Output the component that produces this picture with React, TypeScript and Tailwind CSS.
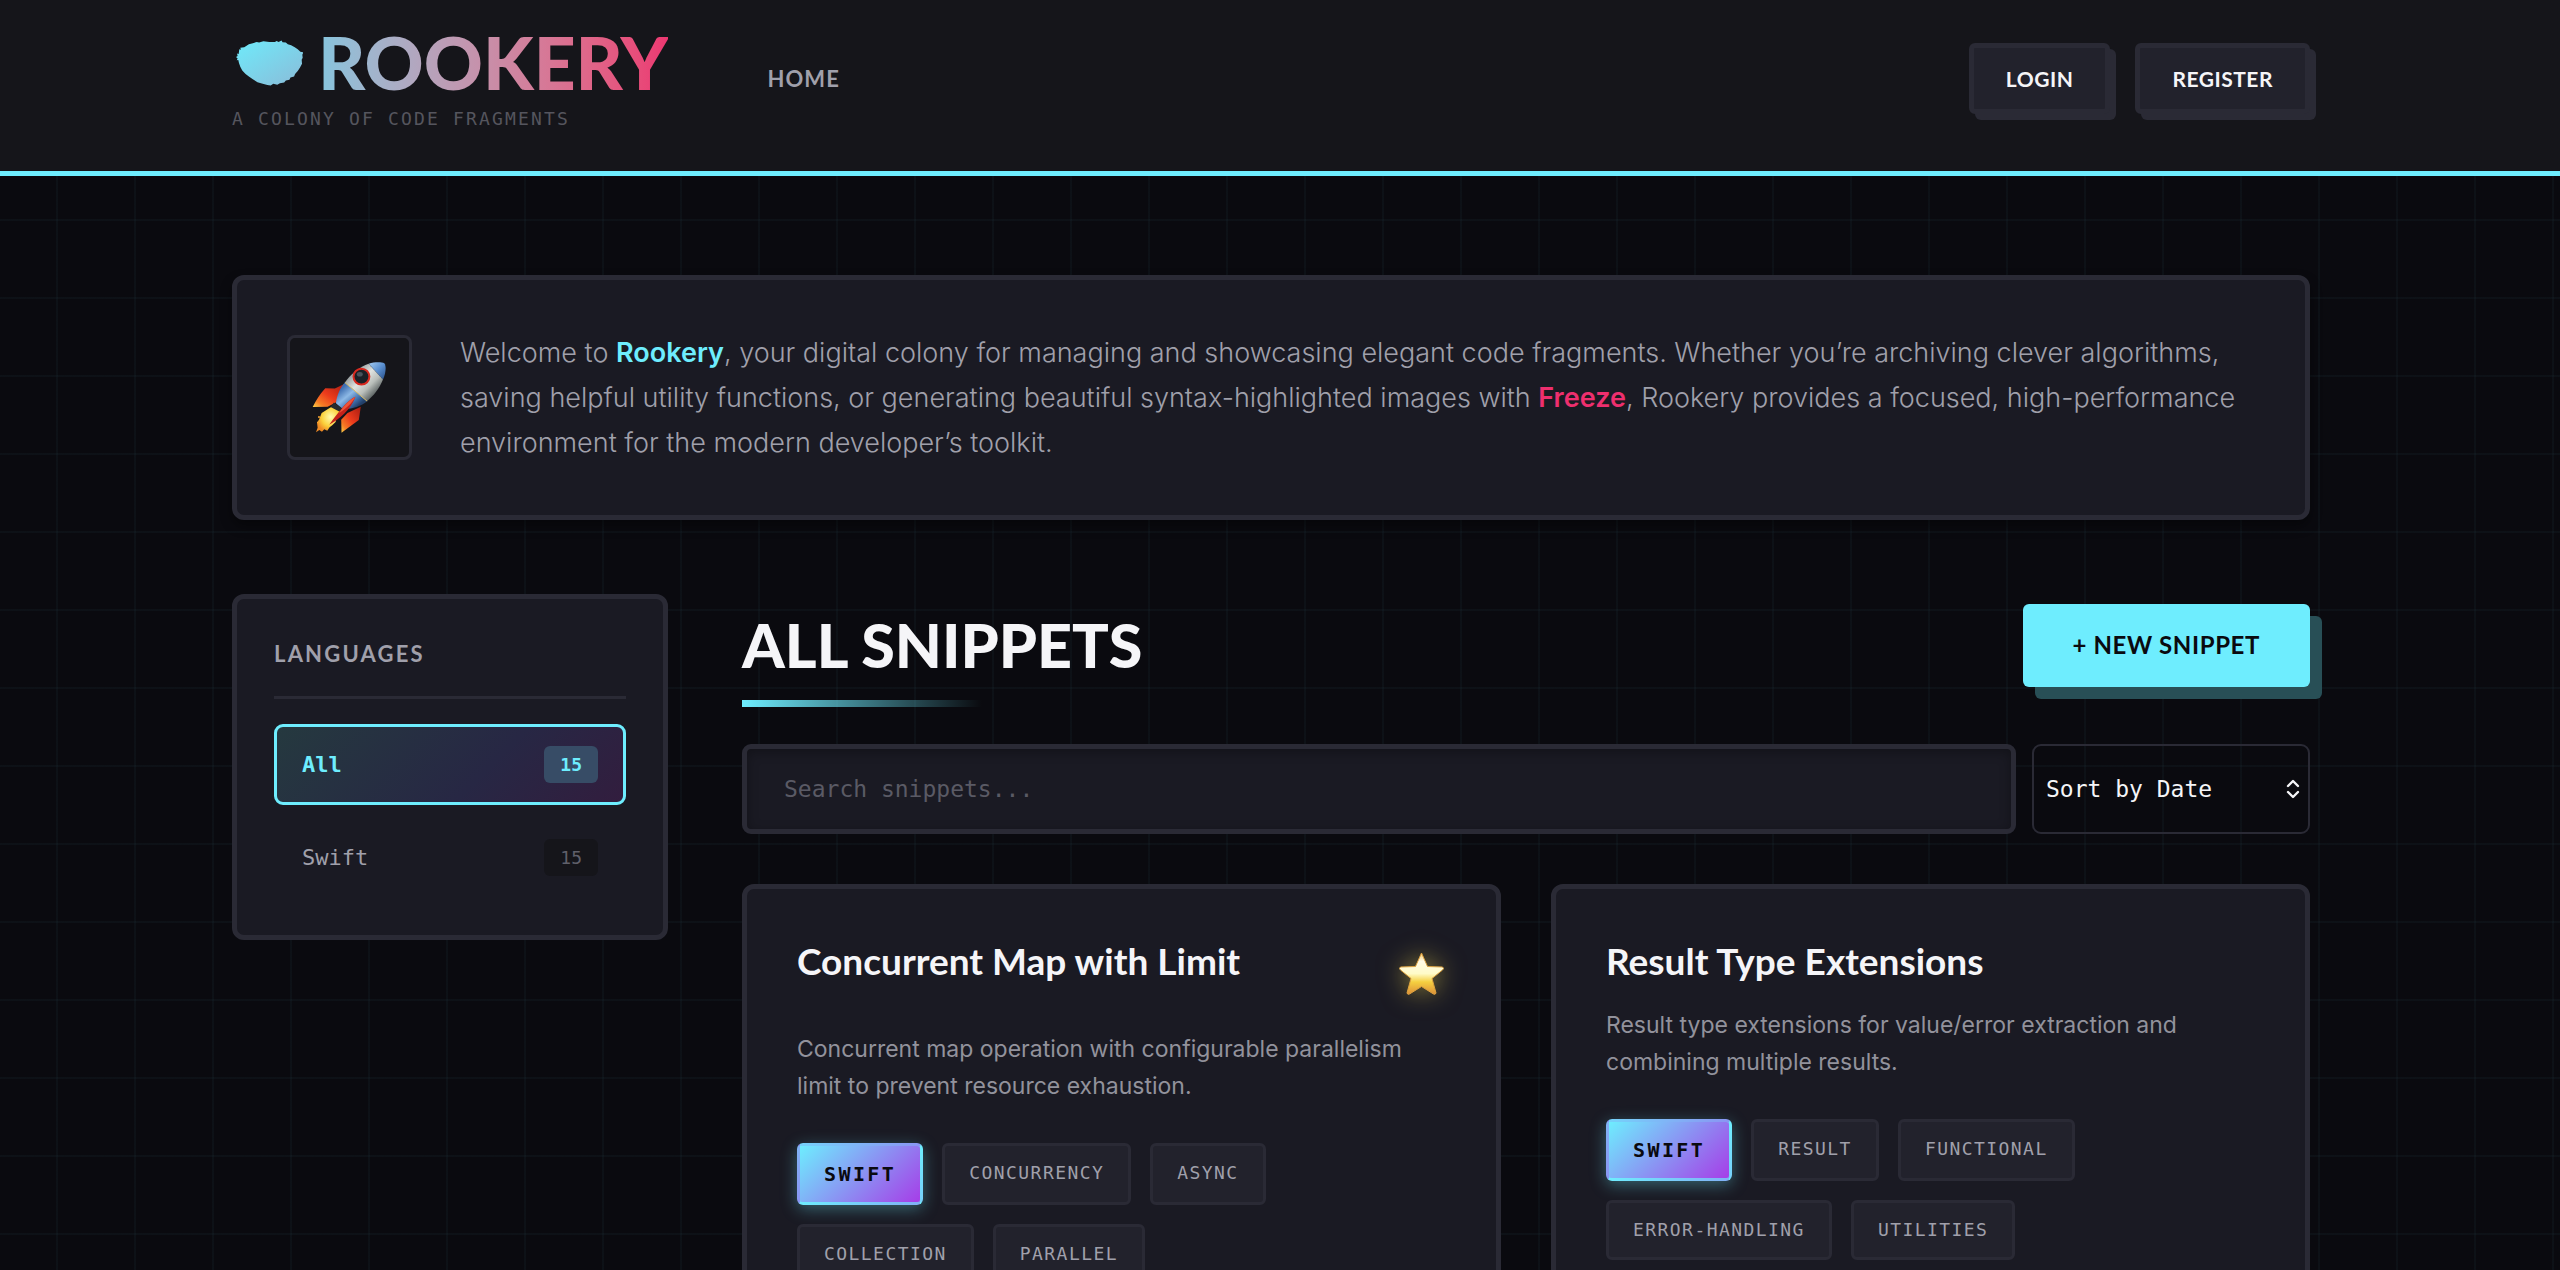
const languages = [
  { name: "All", count: 15, active: true },
  { name: "Swift", count: 15, active: false },
];

const snippets = [
  {
    title: "Concurrent Map with Limit",
    description:
      "Concurrent map operation with configurable parallelism limit to prevent resource exhaustion.",
    language: "Swift",
    tags: ["Concurrency", "Async", "Collection", "Parallel"],
    favorite: true,
  },
  {
    title: "Result Type Extensions",
    description:
      "Result type extensions for value/error extraction and combining multiple results.",
    language: "Swift",
    tags: ["Result", "Functional", "Error-Handling", "Utilities"],
    favorite: false,
  },
];

function LogoMark() {
  return (
    <svg width="67" height="46" viewBox="27 29 203 138" aria-hidden="true">
      <defs>
        <linearGradient id="mark" x1="0" y1="0" x2="1" y2="1">
          <stop offset="0" stopColor="#6eebfb" />
          <stop offset="1" stopColor="#8bbbd8" />
        </linearGradient>
      </defs>
      <path
        fill="url(#mark)"
        d="M27 80L32 77L30 69L35 71L37 56L42 58L40 52L52 50L66 41L78 38L90 34L97 36L110 32L128 34L145 34L150 31L156 34L165 30L168 35L178 36L184 41L194 44L205 50L214 56L222 64L231 66L228 73L229 82L226 88L227 100L221 112L214 122L206 131L203 139L192 142L189 149L178 151L173 157L160 159L152 164L140 161L132 166L122 165L108 161L92 156L78 147L66 139L56 131L46 121L40 109L36 98L34 89L29 90L32 84Z"
      />
    </svg>
  );
}

function Rocket() {
  return (
    <svg width="75" height="71" viewBox="92 105 224 214" role="img" aria-label="Rocket">
      <defs>
        <linearGradient id="hull" x1="0.2" y1="0.2" x2="0.8" y2="0.8">
          <stop offset="0" stopColor="#8d9496" />
          <stop offset="0.4" stopColor="#e0e3e0" />
          <stop offset="0.7" stopColor="#b9beba" />
          <stop offset="1" stopColor="#5d6464" />
        </linearGradient>
        <linearGradient id="belly" x1="0.2" y1="0.2" x2="0.8" y2="0.8">
          <stop offset="0" stopColor="#3d6db0" />
          <stop offset="0.4" stopColor="#8db9e6" />
          <stop offset="0.75" stopColor="#3f70ad" />
          <stop offset="1" stopColor="#223f68" />
        </linearGradient>
        <linearGradient id="nose" x1="0" y1="0" x2="1" y2="1">
          <stop offset="0" stopColor="#a6cdf2" />
          <stop offset="0.5" stopColor="#5a8fd0" />
          <stop offset="1" stopColor="#284f88" />
        </linearGradient>
        <linearGradient id="fin" x1="1" y1="0" x2="0" y2="1">
          <stop offset="0" stopColor="#a81c12" />
          <stop offset="0.5" stopColor="#ec3b1c" />
          <stop offset="0.8" stopColor="#f77c25" />
          <stop offset="1" stopColor="#fbd24a" />
        </linearGradient>
        <radialGradient id="flame" cx="0.6" cy="0.4" r="0.6">
          <stop offset="0" stopColor="#fffbb0" />
          <stop offset="0.6" stopColor="#fbd23c" />
          <stop offset="1" stopColor="#f08a24" />
        </radialGradient>
      </defs>
      <path fill="url(#flame)" d="M150 240l26 12-10 18-4 16-10 10-8 6-7 10-9-4-7 7-8-5-10 7 5-14-2-16 6-8 8-20z" />
      <circle cx="112" cy="271" r="3" fill="#f7a531" />
      <circle cx="108" cy="287" r="2" fill="#f7a531" />
      <path fill="url(#fin)" d="M188 171L160 185L131 184Q108 209 93 241L138 240L164 226Z" />
      <path fill="url(#fin)" d="M238 240L232 280L180 318L179 279L198 259Z" />
      <path fill="#262b2e" d="M157 227l24 18-8 9-26-13z" />
      <path fill="url(#belly)" d="M190 167C176 182 166 205 163 229L183 246C208 248 238 239 257 223Z" />
      <path fill="url(#hull)" d="M190 167C205 143 235 119 262 110L305 158C294 185 276 208 257 223Z" />
      <path fill="url(#nose)" d="M262 110C278 105 300 104 309 109C316 119 313 140 305 158Z" />
      <path fill="none" stroke="#d9bd6b" strokeWidth="3" d="M190 167L257 223" />
      <path fill="none" stroke="#7a8286" strokeWidth="2" strokeDasharray="3 4" d="M262 112L304 157" />
      <path fill="#c5221a" d="M222 210C198 220 172 255 143 294C172 278 208 250 222 210Z" />
      <path fill="#ee5337" d="M222 210C200 222 184 240 172 260C192 246 212 230 222 210Z" />
      <circle cx="240" cy="149" r="24" fill="#1b2026" stroke="#d8281e" strokeWidth="6" />
      <ellipse cx="235" cy="142" rx="9" ry="7" fill="#49525b" />
    </svg>
  );
}

function Star() {
  return (
    <svg
      width="45"
      height="43"
      viewBox="0 0 90 86"
      className="overflow-visible drop-shadow-[0_0_12px_rgba(255,230,80,0.5)]"
      aria-hidden="true"
    >
      <defs>
        <linearGradient id="star" x1="0" y1="0" x2="0" y2="1">
          <stop offset="0" stopColor="#f6c667" />
          <stop offset="0.2" stopColor="#fffbe6" />
          <stop offset="0.5" stopColor="#fffbc8" />
          <stop offset="0.7" stopColor="#f5d040" />
          <stop offset="1" stopColor="#dd8f38" />
        </linearGradient>
      </defs>
      <path
        fill="url(#star)"
        stroke="#dda240"
        strokeWidth="2"
        strokeLinejoin="round"
        d="M45 2L57 29L87 30Q91 33 87 36L66 53L74 82Q73 86 69 84L45 69L21 84Q17 86 16 82L24 53L3 36Q-1 33 3 30L33 29Z"
      />
    </svg>
  );
}

function Header() {
  return (
    <header className="bg-[#15151a] border-b-5 border-[#6eedfe] pr-[18px]">
      <div className="max-w-[2178px] mx-auto px-[50px] pt-[25px] pb-[39px] flex items-center">
        <div>
          <a href="#" className="flex items-center gap-[15px] pl-1 h-[75px]">
            <LogoMark />
            <span className="font-['Lato',sans-serif] font-black text-[73px] leading-[75px] bg-linear-to-r from-[#85c5de] to-[#ec3771] bg-clip-text text-transparent">
              ROOKERY
            </span>
          </a>
          <p className="mt-[5px] font-['DejaVu_Sans_Mono',monospace] text-[18px] leading-[27px] tracking-[0.12em] text-[#55555e] uppercase">
            A colony of code fragments
          </p>
        </div>
        <nav className="ml-[99px]">
          <a
            href="#"
            className="font-['Lato',sans-serif] font-bold text-[22px] tracking-wider text-[#a0a0ab]"
          >
            HOME
          </a>
        </nav>
        <div className="ml-auto flex gap-[25px]">
          {["LOGIN", "REGISTER"].map((label) => (
            <button
              key={label}
              className="h-[71px] px-8 rounded-md border-5 border-[#2a2a35] bg-[#22222c] shadow-[6px_6px_0_#2a2a35] font-['Lato',sans-serif] font-bold text-[21px] tracking-wide text-[#f5f5f8]"
            >
              {label}
            </button>
          ))}
        </div>
      </div>
    </header>
  );
}

export default function App() {
  return (
    <div className="min-h-screen bg-[#0a0a0f] bg-[linear-gradient(rgba(110,237,254,0.03)_2px,transparent_2px),linear-gradient(90deg,rgba(110,237,254,0.03)_2px,transparent_2px)] bg-[length:78px_78px] bg-[position:56px_63px] text-[#f5f5f8]">
      <Header />

      <div className="pr-[18px]">
        <main className="max-w-[2178px] mx-auto px-[50px] pt-[99px] pb-[100px]">
          {/* Intro */}
          <section className="flex items-center gap-12 p-[50px] rounded-xl border-5 border-[#2a2a35] bg-[#1a1a23] shadow-[0_6px_12px_rgba(0,0,0,0.4)]">
            <div className="w-[125px] h-[125px] shrink-0 flex items-center justify-center rounded-lg border-3 border-[#2a2a35] bg-[#15151a]">
              <Rocket />
            </div>
            <p className="font-['Inter',sans-serif] font-light text-[27px] leading-[45px] text-[#a0a0ab]">
              Welcome to{" "}
              <strong className="font-semibold text-[#6eedfe]">Rookery</strong>,
              your digital colony for managing and showcasing elegant code
              fragments. Whether you’re archiving clever algorithms, saving
              helpful utility functions, or generating beautiful
              syntax-highlighted images with{" "}
              <strong className="font-semibold text-[#ee2f6e]">Freeze</strong>,
              Rookery provides a focused, high-performance environment for the
              modern developer’s toolkit.
            </p>
          </section>

          <div className="mt-[74px] flex items-start gap-[74px]">
            {/* Sidebar */}
            <aside className="w-[436px] shrink-0 p-[37px] rounded-xl border-5 border-[#2a2a35] bg-[#1a1a23]">
              <h3 className="pb-6 mb-[25px] border-b-3 border-[#2a2a35] font-['Lato',sans-serif] font-bold text-[22px] leading-9 tracking-widest text-[#a0a0ab]">
                LANGUAGES
              </h3>
              <ul className="flex flex-col gap-3">
                {languages.map((lang) => (
                  <li key={lang.name}>
                    <a
                      href="#"
                      className={
                        lang.active
                          ? "flex items-center justify-between h-[81px] px-[25px] rounded-[9px] border-3 border-[#6eedfe] bg-linear-[135deg,#25393f,#272744_60%,#321d3e] text-[#6eedfe] font-bold"
                          : "flex items-center justify-between h-[81px] px-[25px] rounded-[9px] border-3 border-transparent text-[#a0a0ab]"
                      }
                    >
                      <span className="font-['DejaVu_Sans_Mono',monospace] text-[22px]">
                        {lang.name}
                      </span>
                      <span
                        className={
                          lang.active
                            ? "px-4 rounded-md bg-[#374c66] font-['DejaVu_Sans_Mono',monospace] text-[18px] leading-[37px]"
                            : "px-4 rounded-md bg-[#15151a] font-['DejaVu_Sans_Mono',monospace] text-[18px] leading-[37px] text-[#60606a]"
                        }
                      >
                        {lang.count}
                      </span>
                    </a>
                  </li>
                ))}
              </ul>
            </aside>

            {/* Snippets */}
            <section className="flex-1 min-w-0">
              <div className="flex items-center justify-between h-[102px]">
                <h1 className="font-['Lato',sans-serif] font-black text-[61px]">
                  ALL SNIPPETS
                </h1>
                <button className="h-[83px] px-[50px] rounded-md bg-[#6eedfe] shadow-[12px_12px_0_#284f56] font-['Lato',sans-serif] font-bold text-[24px] tracking-wide text-[#0a0a0f]">
                  + NEW SNIPPET
                </button>
              </div>
              <div className="mt-1 h-[7px] w-[240px] bg-linear-to-r from-[#6eedfe] to-transparent" />

              <div className="mt-[37px] flex gap-4">
                <input
                  type="text"
                  aria-label="Search snippets"
                  placeholder="Search snippets..."
                  className="flex-1 min-w-0 h-[90px] px-[37px] rounded-[9px] border-5 border-[#2a2a35] bg-[#1a1a23] shadow-[inset_0_3px_12px_rgba(0,0,0,0.3)] font-['DejaVu_Sans_Mono',monospace] text-[23px] placeholder:text-[#5a5a65]"
                />
                <div className="relative w-[278px]">
                  <select
                    aria-label="Sort snippets"
                    className="w-full h-[90px] pl-3 appearance-none rounded-[9px] border-2 border-[#2a2a35] font-['DejaVu_Sans_Mono',monospace] text-[23px] text-[#f5f5f8]"
                  >
                    <option>Sort by Date</option>
                  </select>
                  <svg
                    width="14"
                    height="20"
                    viewBox="0 0 14 20"
                    fill="none"
                    stroke="#f5f5f8"
                    strokeWidth="2.4"
                    strokeLinecap="round"
                    strokeLinejoin="round"
                    className="absolute right-2.5 top-[35px] pointer-events-none"
                  >
                    <path d="M2 7l5-5 5 5M2 13l5 5 5-5" />
                  </svg>
                </div>
              </div>

              <div className="mt-[50px] grid grid-cols-2 gap-[50px]">
                {snippets.map((snippet) => (
                  <article
                    key={snippet.title}
                    className="p-[50px] rounded-xl border-5 border-[#2a2a35] bg-[#1a1a23]"
                  >
                    <div className="flex items-start justify-between mb-6">
                      <h2 className="font-['Lato',sans-serif] font-bold text-[37px] leading-[44px]">
                        {snippet.title}
                      </h2>
                      {snippet.favorite && (
                        <button
                          aria-label="Favorite"
                          className="w-[50px] h-[68px] flex items-center justify-center"
                        >
                          <Star />
                        </button>
                      )}
                    </div>
                    <p className="font-['Inter',sans-serif] text-[23px] leading-[37px] text-[#92929c]">
                      {snippet.description}
                    </p>
                    <div className="mt-[38px] flex flex-wrap gap-[19px] font-['DejaVu_Sans_Mono',monospace] uppercase">
                      <span className="px-6 py-3 rounded-md border-3 border-[#6eedfe]/50 bg-linear-[135deg,#6eedfe,#a63de8] shadow-[0_4px_16px_rgba(110,237,254,0.35)] text-[20px] leading-8 font-bold tracking-[0.12em] text-[#0a0a0f]">
                        {snippet.language}
                      </span>
                      {snippet.tags.map((tag) => (
                        <span
                          key={tag}
                          className="px-6 py-3 rounded-md border-3 border-[#2a2a35] bg-[#22222c] text-[18px] leading-[30px] tracking-[0.08em] text-[#a0a0ab]"
                        >
                          {tag}
                        </span>
                      ))}
                    </div>
                  </article>
                ))}
              </div>
            </section>
          </div>
        </main>
      </div>
    </div>
  );
}
